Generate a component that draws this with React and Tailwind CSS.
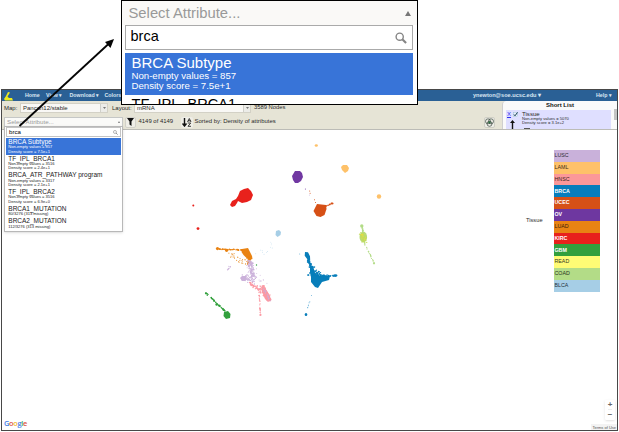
import React from "react";

const attributes = [
  { name: "BRCA Subtype", lines: ["Non-empty values = 857", "Density score = 7.5e+1"], active: true },
  { name: "TF_IPL_BRCA1", lines: ["Non-empty values = 3516", "Density score = 2.4e+1"] },
  { name: "BRCA_ATR_PATHWAY program", lines: ["Non-empty values = 3317", "Density score = 2.1e+1"] },
  { name: "TF_IPL_BRCA2", lines: ["Non-empty values = 3516", "Density score = 6.9e+0"] },
  { name: "BRCA1_MUTATION", lines: ["80/3276 (313 missing)"] },
  { name: "BRCA2_MUTATION", lines: ["112/3276 (313 missing)"] },
];

const legend = [
  ["LUSC", "bg-[#c9b1da] text-[#302b35]"],
  ["LAML", "bg-[#fec169] text-[#3a2c18]"],
  ["HNSC", "bg-[#fb9899] text-[#3a2323]"],
  ["BRCA", "bg-[#077dbb] text-white font-bold"],
  ["UCEC", "bg-[#d65016] text-white font-bold"],
  ["OV", "bg-[#6e37a0] text-white font-bold"],
  ["LUAD", "bg-[#e98313] text-[#35200b]"],
  ["KIRC", "bg-[#e8211c] text-white font-bold"],
  ["GBM", "bg-[#32a03d] text-white font-bold"],
  ["READ", "bg-[#fffc75] text-[#35351e]"],
  ["COAD", "bg-[#b3dc87] text-[#28321e]"],
  ["BLCA", "bg-[#a6cee6] text-[#26323a]"],
];

// Points scattered along a segment: x1, y1, x2, y2, spread, count, radius, color
const scatters = [
  [219, 249, 242, 250, 0.6, 40, 0.7, "#e98313"],
  [230, 254, 249, 264, 4, 34, 0.55, "#ea9c43"],
  [249, 256, 249, 263, 2, 35, 0.7, "#e98313"],
  [231, 267, 227, 270, 2, 10, 0.55, "#cbb1da"],
  [250, 262, 253, 278, 3, 90, 0.7, "#cbb1da"],
  [243, 278, 256, 281, 4, 40, 0.65, "#cbb1da"],
  [248, 264, 262, 285, 7, 34, 0.5, "#d4bedf"],
  [249, 283, 265, 293, 2.5, 60, 0.7, "#fb9aa4"],
  [262, 287, 270, 301, 3, 90, 0.7, "#fb9aa4"],
  [264, 289, 269, 300, 2, 22, 0.5, "#cbb1da"],
  [259, 292, 260.5, 315, 0.7, 28, 0.6, "#fb9aa4"],
  [258, 254, 275, 246, 5, 9, 0.4, "#a6cee6"],
  [206, 293, 225, 311, 0.6, 42, 0.7, "#32a03d"],
  [308, 259, 313, 272, 1.5, 45, 0.8, "#087eba"],
  [311, 269, 325, 278, 4, 60, 0.7, "#087eba"],
  [307, 275, 335, 276, 1, 40, 0.7, "#087eba"],
  [312, 294, 306, 313, 0.4, 7, 0.5, "#63afd8"],
  [364, 242, 374, 263, 0.7, 22, 0.6, "#b3dc87"],
  [362, 225, 363, 232, 0.7, 15, 0.7, "#b3dc87"],
  [361, 234, 365, 241, 3.2, 45, 0.6, "#c5dc58"],
  [362, 234, 365, 240, 2.4, 10, 0.5, "#f1dc39"],
  [308, 189, 317, 205, 1, 4, 0.5, "#d65016"],
  [324, 207, 333, 203, 0.6, 13, 0.6, "#d65016"],
  [271, 242, 272, 246, 0.6, 3, 0.3, "#a6cee6"],
];

const random = (seed) => () => {
  seed = (seed * 16807) % 2147483647;
  return seed / 2147483647;
};

function Nodes() {
  const rnd = random(4149);
  return (
    <svg className="block h-full w-full" viewBox="3 130 613 300" preserveAspectRatio="xMinYMin slice">
      <g fill="#e8211c">
        <path d="M244 189l4-1 3 3 2 4-2 5-4 2-5 1-4-2-1 2-2 3-3 1-2-2 2-4 4-2 2-3 2-5z" />
        <circle cx="193.3" cy="205.4" r="1" /><circle cx="198" cy="228.6" r="1.4" />
      </g>
      <path fill="#7138a2" d="M295 171h5l2 2 1 4-2 4-3 2h-3l-2-3-1-4z" />
      <g fill="#6e37a0"><circle cx="305.4" cy="189" r=".5" /><circle cx="309.3" cy="195" r=".35" /></g>
      <g fill="#fec169">
        <ellipse cx="316.3" cy="145.5" rx="1.6" ry="1.3" /><path d="M343 165h4l2 3-1 3-3 2-3-3-1-3z" /><circle cx="379" cy="196.5" r="2.2" />
      </g>
      <path fill="#d65016" d="M317 204l9 1 .5 4-2 6-4 2-4-1-3-5z" />
      <ellipse cx="332" cy="203.5" rx="1.6" ry="1" fill="#d65016" />
      <path fill="#a6cee6" d="M276 231l3-1 2 2-.5 3-3 2-2-2z" />
      <path fill="#e98313" d="M242 249l6-1 2 4 2 4 .5 3-3 1-3-2-3-3-2-3z" />
      <g fill="#e98313"><circle cx="217.5" cy="248.6" r="1.6" /><circle cx="226.6" cy="250.3" r="1.6" /></g>
      <path fill="#cbb1da" d="M242 276h4l1 3-2 2h-3l-2-3z" />
      <path fill="#fb9aa4" d="M262 287l3 1 5 8 1 4-3 2-3-3-3-7z" />
      <g fill="#32a03d">
        <path d="M224 312l4-1 2.5 3-.5 4-4 1-2.5-3z" /><circle cx="206" cy="293.3" r="1.1" /><circle cx="216.7" cy="304.4" r="1.3" /><circle cx="256.5" cy="265" r=".7" />
      </g>
      <g fill="#087eba">
        <path d="M305 252l3 .3 2 4 .2 4-2.5-.5-3-4zM310 265l3 1 2 7 4 3 5-1 6 1-1 4-7 2-4 6-3-1-4-5v-5l-1-4z" />
        <ellipse cx="335.3" cy="275.5" rx="2.2" ry="1.2" /><ellipse cx="306" cy="314.5" rx="1.3" ry="1.6" /><circle cx="299.8" cy="254" r=".4" />
      </g>
      <ellipse cx="363.3" cy="237" rx="3.8" ry="5.4" fill="#b9db76" />
      <circle cx="361.8" cy="226" r="1.7" fill="#b3dc87" /><circle cx="374" cy="263.3" r="1.1" fill="#b3dc87" />
      <circle cx="260.4" cy="315" r="1.1" fill="#fb9aa4" />
      {scatters.map(([x1, y1, x2, y2, spread, count, r, color], i) => (
        <g key={i} fill={color}>
          {Array.from({ length: count }, (_, j) => {
            const t = rnd();
            const dx = (rnd() + rnd() - 1) * spread;
            const dy = (rnd() + rnd() - 1) * spread;
            return <circle key={j} cx={x1 + (x2 - x1) * t + dx} cy={y1 + (y2 - y1) * t + dy} r={r} />;
          })}
        </g>
      ))}
    </svg>
  );
}

function Search({ className }) {
  return (
    <svg className={className} viewBox="0 0 12 12" fill="none" stroke="#858585">
      <circle cx="4.7" cy="4.7" r="3.6" strokeWidth="1.4" />
      <path d="M7.3 7.3l3.8 3.8" strokeWidth="2.1" />
    </svg>
  );
}

function Select({ children, className }) {
  return (
    <div className={`flex h-[10px] items-center border border-[#d3d1c6] bg-[#f9f8f5] pl-[2px] ${className}`}>
      <span className="flex-1">{children}</span>
      <span className="flex h-full w-[7px] items-center justify-center border-l border-[#d0d0ca] bg-[#ecece8]">
        <svg className="h-[2px] w-[3px]" viewBox="0 0 3 2"><path d="M0 0h3L1.5 2z" fill="#777" /></svg>
      </span>
    </div>
  );
}

function AttributeMenu() {
  return (
    <div className="absolute top-[36px] left-[2px] h-[106px] w-[119px] border border-[#b8b8b8] bg-white px-px shadow-sm">
      <div className="flex h-[10px] items-center justify-between border border-[#c4c4c4] bg-white pr-[2px] pl-[2px] text-[6.1px] leading-none text-black">
        brca
        <Search className="h-[5px] w-[5px]" />
      </div>
      <div className="pt-px">
        {attributes.map((a) => (
          <div key={a.name} className={`pl-[2.3px] ${a.lines.length === 2 ? "h-[16.7px]" : "h-[12.7px]"} ${a.active ? "bg-[#3874d8] text-white" : "text-[#222]"}`}>
            <div className="text-[6.5px] leading-[7.4px] whitespace-nowrap">{a.name}</div>
            {a.lines.map((l) => <div key={l} className="text-[4.05px] leading-[4.2px] whitespace-nowrap">{l}</div>)}
          </div>
        ))}
      </div>
    </div>
  );
}

function Callout() {
  return (
    <div className="absolute top-0 left-[121px] h-[105px] w-[297px] overflow-hidden border-[1.5px] border-black bg-white">
      <div className="flex h-[24px] items-center justify-between bg-[#faf9f7] pr-[6px] pl-[6.5px] text-[14.8px] text-[#999]">
        <span className="leading-none">Select Attribute...</span>
        <svg className="h-[5px] w-[6px]" viewBox="0 0 6 5"><path d="M3 0L6 5H0z" fill="#777" /></svg>
      </div>
      <div className="mr-[4px] ml-[3px] flex h-[25px] items-center justify-between border border-[#aaa] pr-[5px] pl-[4.5px] text-[14.5px] leading-none text-black">
        <span className="-mt-[2px]">brca</span>
        <Search className="h-[12px] w-[12px]" />
      </div>
      <div className="mt-[3px] mr-[4px] ml-[3px] h-[42px] bg-[#3874d8] pt-[2px] pl-[6.5px] text-white">
        <div className="text-[15px] leading-[16px]">BRCA Subtype</div>
        <div className="text-[9.65px] leading-[10.2px]">Non-empty values = 857</div>
        <div className="text-[9.65px] leading-[10.2px]">Density score = 7.5e+1</div>
      </div>
      <div className="mt-px pl-[9.5px] text-[14.6px] leading-[16px] text-black">TF_IPL_BRCA1</div>
    </div>
  );
}

export default function App() {
  return (
    <div className="relative h-[432px] w-[619px] overflow-hidden bg-white pt-[89px] pl-px font-['Liberation_Sans',Arial,sans-serif] text-[6px] leading-none text-[#292929]">
      <div className="relative flex h-[342px] w-[617px] flex-col border border-[#484848] bg-white">
        <nav className="flex h-[11px] shrink-0 items-center bg-[#2a6095] pt-px text-[5.3px] font-bold whitespace-nowrap text-[#d9e6f2]">
          <svg className="ml-[2px] h-[9px] w-[9px]" viewBox="0 0 9 9">
            <path d="M4 0l2 .5-2.5 4L5 6h3l1 2.5H1L0 7l2-3z" fill="#eeea1d" />
          </svg>
          <span className="ml-[12px] w-[21px]">Home</span>
          <span className="w-[23.5px]">View ▾</span>
          <span className="w-[35px]">Download ▾</span>
          <span>Colors</span>
          <span className="mr-[55px] ml-auto text-[5.6px]">ynewton@soe.ucsc.edu ▾</span>
          <span className="mr-[5px]">Help ▾</span>
        </nav>
        <div className="flex h-[29px] shrink-0 justify-between border-b border-[#bcbcb7] bg-[#e6e4d6]">
          <div className="flex-1">
            <div className="flex h-[14px] items-center whitespace-nowrap">
              <span className="w-[18px] pl-[2px]">Map:</span>
              <Select className="w-[88px]">Pancan12/stable</Select>
              <span className="w-[26px] pl-[4px]">Layout:</span>
              <Select className="w-[117px]">mRNA</Select>
              <span className="ml-[3px] text-[5.85px]">3589 Nodes</span>
            </div>
            <div className="flex h-[14px] items-center whitespace-nowrap">
              <div className="ml-[2px] flex h-[11px] w-[119px] items-center justify-between border border-[#c5c7c6] bg-[#fafaf8] pr-[2px] pl-[2px] text-[6.2px] text-[#999]">
                <span>Select Attribute...</span>
                <svg className="h-[2px] w-[2px]" viewBox="0 0 2 2"><path d="M1 0l1 2H0z" fill="#777" /></svg>
              </div>
              <span className="ml-[2px] flex h-[11px] w-[11px] items-center justify-center rounded-[2px] border-[0.5px] border-[#d2d1c9] bg-[#efeee7]">
                <svg className="h-[8px] w-[7px]" viewBox="0 0 7 8"><path d="M0 0h7L4.5 3.5V8l-2-1.5v-3z" fill="#111" /></svg>
              </span>
              <span className="ml-[2.5px] w-[42px] text-[5.95px]">4149 of 4149</span>
              <span className="flex h-[11px] w-[12px] items-center justify-center rounded-[2px] bg-[#efeee7]">
                <svg className="h-[9px] w-[10px]" viewBox="0 0 10 9" fill="none" stroke="#111">
                  <path d="M2.5 0v7.5M.5 5.5l2 2.5 2-2.5" strokeWidth="1.4" />
                  <path d="M5.5 4L7.3.5 9 4M6 2.8h2.5M5.7 5h3L6 8.3h3" strokeWidth=".8" />
                </svg>
              </span>
              <span className="ml-[2px] text-[5.95px]">Sorted by: Density of attributes</span>
              <span className="mr-[7px] ml-auto flex h-[11px] w-[11px] items-center justify-center rounded-[2px] border-[0.5px] border-[#cfcfc5] bg-[#efeee8]">
                <svg className="h-[9px] w-[9px]" viewBox="0 0 9 9" stroke="#39483e" strokeWidth=".7" fill="none">
                  <path d="M4.5 3l1.4 1.2L4.5 6 3 4.2z" fill="#26a34a" stroke="none" />
                  <circle cx="3" cy="3.3" r="2.5" /><circle cx="6" cy="3.3" r="2.5" /><circle cx="4.5" cy="5.8" r="2.5" />
                </svg>
              </span>
            </div>
          </div>
          <aside className="w-[115px] overflow-hidden rounded-tl-[4px] border-l border-[#cfcfd0] bg-[#fafafa]">
            <div className="h-[9px] pt-[1px] text-center text-[6px] font-bold text-[#111]">Short List</div>
            <div className="flex">
              <div className="ml-[3px] flex h-[20px] w-[105px] bg-[#dfdfff]">
                <div className="w-[16px] pt-px">
                  <div className="flex h-[6px] items-center gap-[2px] pl-[1px]">
                    <span className="text-[6px] text-[#3030ef] underline">X</span>
                    <svg className="h-[5px] w-[5px]" viewBox="0 0 5 5"><rect x=".2" y=".2" width="4.5" height="4.5" fill="#eaf3fc" stroke="#8ab2cc" strokeWidth=".4" /><path d="M1 2.5l1 1.3L4.5.4" fill="none" stroke="#15384f" /></svg>
                  </div>
                  <svg className="mt-[3px] ml-[4px] h-[10px] w-[5px]" viewBox="0 0 5 10"><path d="M2.5 0L5 3H3.2v6H1.8V3H0z" fill="#111" /></svg>
                </div>
                <div className="pt-px whitespace-nowrap">
                  <div className="text-[6.1px] leading-[6px]">Tissue</div>
                  <div className="text-[4.1px] leading-[4.3px]">Non-empty values = 5070</div>
                  <div className="text-[4.1px] leading-[4.3px]">Density score = 3.1e+2</div>
                  <div className="mt-[2px] ml-[2px] h-[2px] w-[6px] bg-[#555]" />
                </div>
              </div>
              <div className="-mt-[1px] ml-[3px] h-[11px] w-[3px] bg-[#c4c4c4]" />
            </div>
          </aside>
        </div>
        <main className="flex min-h-0 flex-1">
          <div className="flex min-w-0 flex-1 flex-col justify-between">
            <div className="h-[284px] w-[520px] overflow-hidden">
              <div className="h-[300px] w-[613px] pl-px"><Nodes /></div>
            </div>
            <div className="pb-[2px] pl-[2px] font-['Open_Sans','Liberation_Sans',sans-serif] text-[7.4px] leading-[9px] font-semibold tracking-[-0.3px]">
              <span className="text-[#437ee8]">G</span><span className="text-[#dc5445]">o</span><span className="text-[#efb92c]">o</span><span className="text-[#437ee8]">g</span><span className="text-[#35a65b]">l</span><span className="text-[#dc5445]">e</span>
            </div>
          </div>
          <div className="flex w-[91px] shrink-0 flex-col justify-between pt-[20px]">
            <div className="flex items-center">
              <span className="w-[27.5px] text-[5.7px]">Tissue</span>
              <div className="w-[46px]">
                {legend.map(([name, style]) => (
                  <div key={name} className={`flex h-[11.8px] items-center pl-[1px] text-[5.3px] ${style}`}>{name}</div>
                ))}
              </div>
            </div>
            <div className="flex flex-col items-end">
              <div className="mr-[2px] mb-[4px] flex h-[20px] w-[10px] flex-col items-center rounded-[1px] bg-white text-[8px] font-bold text-[#666] shadow-sm">
                <span className="flex h-[10px] items-center border-b border-[#eee]">+</span>
                <span className="flex h-[10px] items-center">−</span>
              </div>
              <div className="bg-[#f3f3f3] px-px pt-px text-[4px] leading-[5px] text-[#555]">Terms of Use</div>
            </div>
          </div>
        </main>
        <AttributeMenu />
      </div>
      <Callout />
      <svg className="pointer-events-none absolute top-0 left-0 h-[150px] w-[125px]" viewBox="0 0 125 150">
        <path d="M19.5 126L109 43.5" stroke="#050505" strokeWidth="1.8" />
        <path d="M114 39l-3.5 9-5.5-6z" fill="#050505" />
      </svg>
    </div>
  );
}
